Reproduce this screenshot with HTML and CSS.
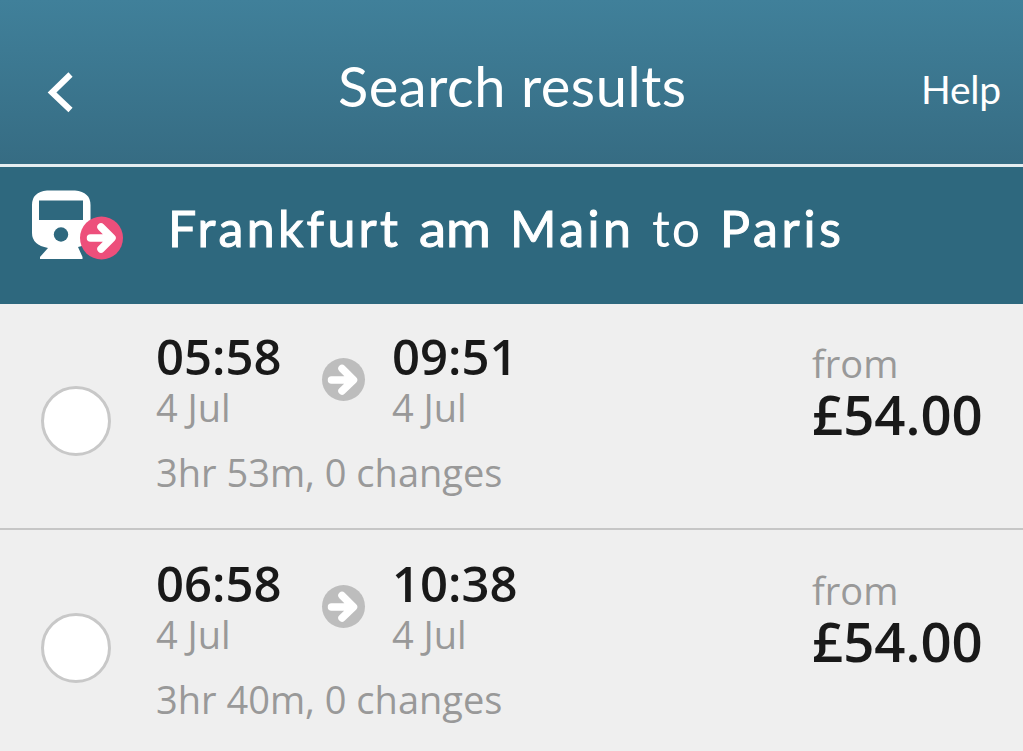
FILE: index.html
```html
<!DOCTYPE html>
<html lang="en">
<head>
<meta charset="utf-8">
<title>Search results</title>
<link rel="stylesheet" href="styles.css">
</head>
<body>
<header class="bar">
  <svg class="back" width="28" height="44" viewBox="0 0 28 44"><path d="M23.500 3.500 5 21.500l18.500 17.500"/></svg>
  <h1 class="title"><svg class="line" width="348" height="64"><text x="-1" y="46" textLength="348" lengthAdjust="spacing">Search results</text></svg></h1>
  <a class="help"><svg class="line" width="80" height="50"><text x="0" y="36" textLength="80" lengthAdjust="spacing">Help</text></svg></a>
</header>
<section class="route">
  <svg class="train" width="94" height="72" viewBox="0 0 94 72">
    <path fill="#fff" fill-rule="evenodd" d="M16 .5H44Q59.500 2 59.500 15V43Q59.500 54 47 57L51.500 67V69H9V67L17 58Q1 55 1 43V15Q1 2 16 .5ZM8 10.500V30H52V10.500Z"/>
    <circle class="lamp" cx="30" cy="44.500" r="7.200"/>
    <circle class="pink" cx="70.500" cy="48" r="21.500"/>
    <path class="arrow" d="M59.500 48H80M70 37 81 48 70 59"/>
  </svg>
  <h2 class="journey"><svg class="line" width="672" height="70"><text y="50"><tspan x="-1" textLength="230" lengthAdjust="spacing">Frankfurt</tspan> <tspan x="250" textLength="72" lengthAdjust="spacingAndGlyphs">am</tspan> <tspan x="341" textLength="121" lengthAdjust="spacing">Main</tspan> <tspan class="to" x="483" textLength="48" lengthAdjust="spacing">to</tspan> <tspan x="551" textLength="121" lengthAdjust="spacing">Paris</tspan></text></svg></h2>
</section>
<main class="list">
  <article class="trip">
    <span class="radio"></span>
    <div class="details">
      <div class="times">
        <div class="stop"><strong class="time">05:58</strong><span class="date">4 Jul</span></div>
        <svg class="go" width="44" height="44" viewBox="0 0 44 44"><circle cx="21.500" cy="21.500" r="21.500"/><path d="M9.500 22H31M20 10.500 31.500 22 20 33"/></svg>
        <div class="stop"><strong class="time">09:51</strong><span class="date">4 Jul</span></div>
      </div>
      <p class="info">3hr 53m, 0 changes</p>
    </div>
    <div class="fare"><span class="from">from</span><strong class="price">£54.00</strong></div>
  </article>
  <article class="trip second">
    <span class="radio"></span>
    <div class="details">
      <div class="times">
        <div class="stop"><strong class="time">06:58</strong><span class="date">4 Jul</span></div>
        <svg class="go" width="44" height="44" viewBox="0 0 44 44"><circle cx="21.500" cy="21.500" r="21.500"/><path d="M9.500 22H31M20 10.500 31.500 22 20 33"/></svg>
        <div class="stop"><strong class="time">10:38</strong><span class="date">4 Jul</span></div>
      </div>
      <p class="info">3hr 40m, 0 changes</p>
    </div>
    <div class="fare"><span class="from">from</span><strong class="price">£54.00</strong></div>
  </article>
</main>
</body>
</html>
```
FILE: styles.css
```css
* { box-sizing: border-box; }
body { margin: 0; height: 751px; overflow: hidden; background: #efefef; font-family: "Open Sans", sans-serif; }
h1, h2, p { margin: 0; font-weight: 400; }
svg { display: block; fill: none; overflow: visible; }
.line { fill: #fff; }
.bar { height: 167px; padding: 22px 22px 0 47px; display: flex; align-items: center; background: linear-gradient(#40809a, #366c83); border-bottom: 3px solid #e6eef1; }
.back { stroke: #fff; stroke-width: 6; }
.title { margin-left: 264px; }
.title text { font: 400 56px Lato, sans-serif; }
.help { margin-left: auto; }
.help text { font: 400 39px Lato, sans-serif; }
.route { height: 137px; background: #2e687e; display: flex; padding: 23px 0 0 31px; }
.train { flex: none; }
.lamp { fill: #2e687e; }
.pink { fill: #ed4f7b; }
.arrow { stroke: #fff; stroke-width: 7.5; stroke-linecap: round; stroke-linejoin: round; }
.journey { margin: 7px 0 0 44px; }
.journey text { font: 400 50px Lato, sans-serif; stroke: #fff; stroke-width: 1; }
.journey .to { stroke: none; }
.trip { height: 226px; display: flex; border-bottom: 2px solid #c6c6c6; padding-left: 41px; }
.second { padding-top: 0.6px; }
.radio { flex: none; width: 70px; height: 70px; margin-top: 82px; border: 3px solid #c8c8c8; border-radius: 50%; background: #fff; }
.details { flex: none; width: 701px; padding: 19px 0 0 45px; }
.times { display: flex; }
.stop { width: 166px; }
.time, .date, .from, .price { display: block; white-space: nowrap; }
.time { font-size: 49px; line-height: 66px; font-weight: 600; color: #191919; }
.date, .info, .from { font-size: 38px; color: #999; }
.date { line-height: 36px; }
.info { line-height: 50px; margin-top: 22px; }
.go { margin: 35px 26px 0 0; }
.go circle { fill: #bdbdbd; }
.go path { stroke: #fff; stroke-width: 7.5; stroke-linecap: round; stroke-linejoin: round; }
.fare { padding-top: 34px; }
.from { line-height: 50px; }
.price { font-size: 54.5px; line-height: 53px; font-weight: 600; color: #191919; }
```
